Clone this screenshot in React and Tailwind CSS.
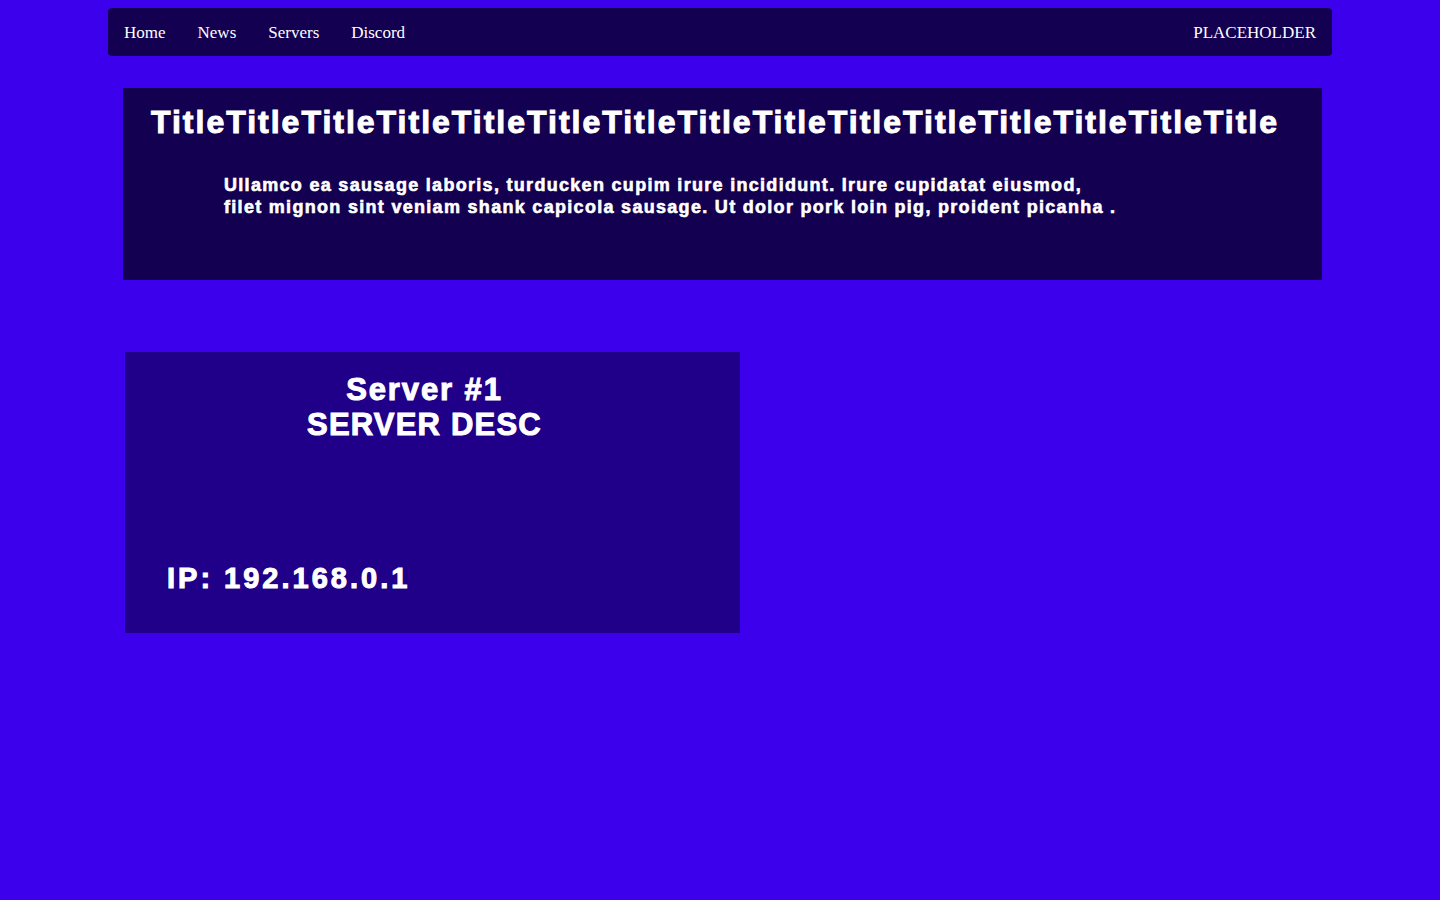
export default function App() {
  const links = ["Home", "News", "Servers", "Discord"];
  return (
    <div className="min-h-[900px] w-full bg-[#3d00ed] pt-2">
      <nav className="mx-[108px] flex h-12 items-center justify-between rounded bg-[#130050] px-4 pt-[2px] font-['Liberation_Serif',serif] text-[17px] text-white">
        <div className="flex gap-8">
          {links.map((l) => (
            <a key={l} href="#" className="text-white">
              {l}
            </a>
          ))}
        </div>
        <span>PLACEHOLDER</span>
      </nav>

      <section className="ml-[123px] mr-[118px] mt-8 h-[192px] bg-[#130050] pl-7 pt-[14px] font-['Liberation_Sans',Arial,sans-serif] font-bold text-white [-webkit-text-stroke:1px_white]">
        <h1 className="text-[32px] leading-[40px] tracking-[2px]">
          TitleTitleTitleTitleTitleTitleTitleTitleTitleTitleTitleTitleTitleTitleTitle
        </h1>
        <p className="ml-[73px] mt-[32px] w-[950px] text-[18px] leading-[22px] tracking-[1.3px] [-webkit-text-stroke:0.6px_white]">
          Ullamco ea sausage laboris, turducken cupim irure incididunt. Irure cupidatat eiusmod,
          <br />
          filet mignon sint veniam shank capicola sausage. Ut dolor pork loin pig, proident picanha .
        </p>
      </section>

      <div className="ml-[125px] mt-[72px] flex h-[281px] w-[615px] flex-col bg-[#200088] font-['Liberation_Sans',Arial,sans-serif] font-bold text-white [-webkit-text-stroke:1px_white]">
        <h2 className="mt-[20px] pr-4 text-center text-[31px] leading-[35px]">
          <span className="tracking-[1.9px]">Server #1</span>
          <br />
          <span className="tracking-[1.2px]">SERVER DESC</span>
        </h2>
        <p className="mt-auto mb-[38px] pl-[42px] text-[29px] leading-[34px] tracking-[3px]">IP: 192.168.0.1</p>
      </div>
    </div>
  );
}
